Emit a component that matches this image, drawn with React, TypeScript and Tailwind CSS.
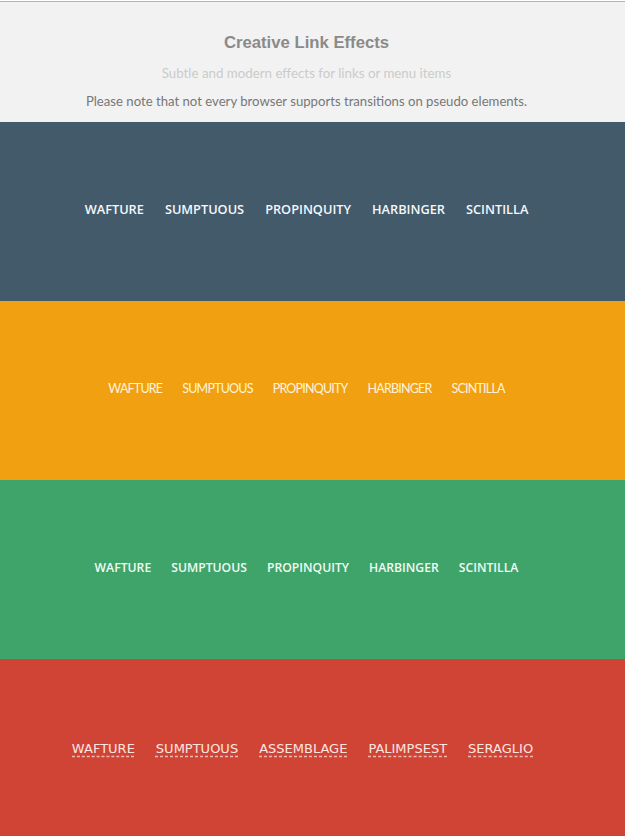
const sets = {
    a: ['WAFTURE', 'SUMPTUOUS', 'PROPINQUITY', 'HARBINGER', 'SCINTILLA'],
    b: ['WAFTURE', 'SUMPTUOUS', 'ASSEMBLAGE', 'PALIMPSEST', 'SERAGLIO'],
};

const Section = ({ bg, children }: { bg: string; children: React.ReactNode }) => (
    <section className={`h-[179px] ${bg}`}>
        <div className="w-[613px] h-full flex items-center justify-center">{children}</div>
    </section>
);

export default function App() {
    return (
        <div className="w-[625px] h-[836px] overflow-hidden bg-[#f2f2f2]">
            <div className="h-px bg-white" />
            <div className="h-px bg-[#b4b4b4]" />

            <header className="w-[613px] h-[120px] flex flex-col items-center text-center">
                <h1 className="mt-[31px] text-[16.7px] leading-5 font-bold text-[#8a8a8a] font-['Liberation_Sans',Arial,sans-serif]">
                    Creative Link Effects
                </h1>
                <p className="mt-[12px] text-[13.3px] leading-4 text-[#cbcbcb] font-['Lato',sans-serif]">
                    Subtle and modern effects for links or menu items
                </p>
                <p className="mt-[12px] text-[13.15px] leading-4 text-[#777] font-['Lato',sans-serif]">
                    Please note that not every browser supports transitions on pseudo elements.
                </p>
            </header>

            <Section bg="bg-[#435a6b]">
                <nav className="flex gap-[21px] -translate-y-[2px] font-['Open_Sans',sans-serif] font-semibold text-[12.75px] text-[#f5f8fa]">
                    {sets.a.map((w) => (
                        <a key={w}>{w}</a>
                    ))}
                </nav>
            </Section>

            <Section bg="bg-[#f0a011]">
                <nav className="flex gap-[20px] -translate-y-[1px] font-['Lato',sans-serif] text-[12.5px] tracking-[-0.8px] text-[#fff3dc]">
                    {sets.a.map((w) => (
                        <a key={w}>{w}</a>
                    ))}
                </nav>
            </Section>

            <Section bg="bg-[#3fa46a]">
                <nav className="flex gap-[20px] -translate-y-[1px] font-['Open_Sans',sans-serif] font-semibold text-[12.2px] text-[#f0fbf4]">
                    {sets.a.map((w) => (
                        <a key={w}>{w}</a>
                    ))}
                </nav>
            </Section>

            <Section bg="bg-[#cf4434]">
                <nav className="flex gap-[21px] -translate-x-[4px] font-['DejaVu_Sans',Verdana,sans-serif] text-[13px] text-[#fde6e2]">
                    {sets.b.map((w) => (
                        <a key={w} className="underline decoration-dashed decoration-[#f2b8b0] underline-offset-[3px]">
                            {w}
                        </a>
                    ))}
                </nav>
            </Section>
        </div>
    );
}
